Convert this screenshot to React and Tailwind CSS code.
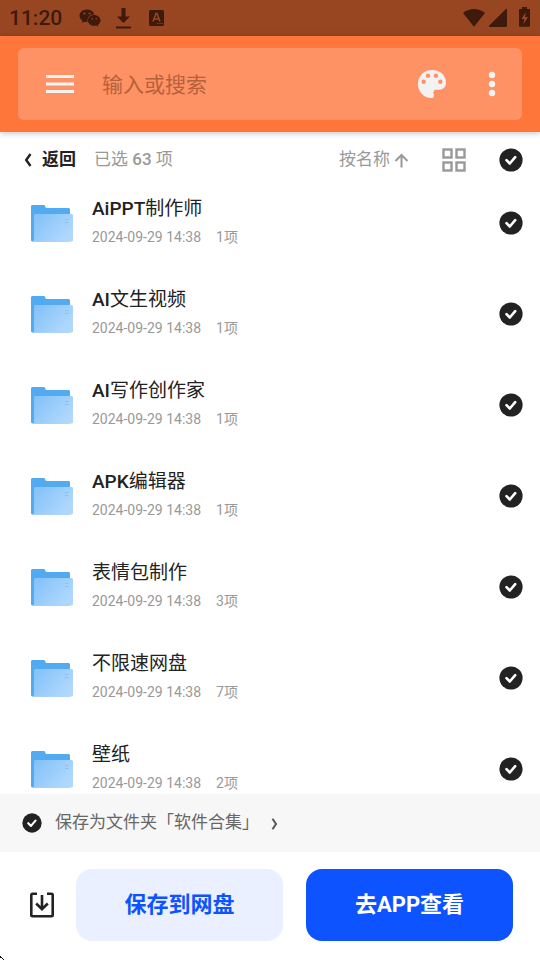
import { FaWeixin } from "react-icons/fa";

const FOLDERS = [
  { latin: "AiPPT", name: "制作师", date: "2024-09-29 14:38", count: 1 },
  { latin: "AI", name: "文生视频", date: "2024-09-29 14:38", count: 1 },
  { latin: "AI", name: "写作创作家", date: "2024-09-29 14:38", count: 1 },
  { latin: "APK", name: "编辑器", date: "2024-09-29 14:38", count: 1 },
  { latin: "", name: "表情包制作", date: "2024-09-29 14:38", count: 3 },
  { latin: "", name: "不限速网盘", date: "2024-09-29 14:38", count: 7 },
  { latin: "", name: "壁纸", date: "2024-09-29 14:38", count: 2 },
];

export default function App() {
  return (
    <div className="relative flex h-screen flex-col overflow-hidden bg-white font-['Roboto','Noto_Sans_CJK_SC',sans-serif] text-[#222222]">
      <StatusBar />
      <SearchHeader />
      <main className="flex min-h-0 flex-1 flex-col">
        <Toolbar />
        <ul className="min-h-0 flex-1 overflow-hidden">
          {FOLDERS.map((f) => <FolderRow key={f.latin + f.name} folder={f} />)}
        </ul>
      </main>
      <SaveTarget />
      <Actions />
      {/* Pointer tip in the corner */}
      <svg className="absolute bottom-0 left-0" width="5" height="5" viewBox="0 0 5 5" fill="#111111" shapeRendering="crispEdges" aria-hidden="true">
        <path d="M0 1h1v1h1v1H0zM2 3h1v1H2zM3 4h1v1H3z" />
      </svg>
    </div>
  );
}

const StatusBar = () => (
  <div className="flex h-9 shrink-0 items-center justify-between bg-[#984622] pl-[9px] pr-[9px] text-[#3d1a0c]">
    <div className="flex items-center">
      <span className="w-[70px] text-[21px] font-medium leading-9">11:20</span>
      <FaWeixin size={22} />
      <svg className="ml-[14px]" width="17" height="22" viewBox="0 0 17 22" fill="currentColor" aria-hidden="true">
        <path d="M6.500 1h4v8.500h4.500L8.500 16 2 9.500h4.500zM1 19.500h15v2H1z" />
      </svg>
      <svg className="ml-4" width="16" height="18" viewBox="0 0 16 18" aria-hidden="true">
        <rect x="1" y="1" width="15" height="16" rx="1.500" fill="currentColor" />
        <path d="M5 12.500 8 4.500h1l3 8M6.200 10h4.600" fill="none" stroke="#984622" strokeWidth="1.600" />
        <path d="M9 14.500h1.200M11.400 14.500h1.200M13.600 14.500h1.200" stroke="#984622" strokeWidth="1.200" />
      </svg>
    </div>
    <div className="flex items-center">
      <svg width="24" height="20" viewBox="0 0 24 20" fill="currentColor" aria-hidden="true">
        <path d="M1 5C7.500-.3 16.500-.3 23 5L12 18.800z" />
      </svg>
      <svg className="ml-0.5" width="20" height="20" viewBox="0 0 20 20" fill="currentColor" aria-hidden="true">
        <path d="M19 1.500V18a1 1 0 0 1-1 1H1.500c-.6 0-.9-.8-.4-1.200L18 1c.4-.4 1-.1 1 .5z" />
      </svg>
      <svg className="ml-2.5" width="13" height="22" viewBox="0 0 13 22" aria-hidden="true">
        <path d="M4 0h5v2h2.500l.5.500V19l-.8.800H1.800L1 19V2.500L1.500 2H4z" fill="currentColor" />
        <path d="M7.800 5 3.500 12h2.800l-1 5.500L10 10H7z" fill="#984622" />
      </svg>
    </div>
  </div>
);

const SearchHeader = () => (
  <header className="z-10 shrink-0 bg-[#ff763a] px-[18px] py-3 shadow-[0_1px_6px_rgba(0,0,0,0.25)]">
    <div className="flex h-[72px] items-center rounded-md bg-[#ff9264] pl-7 pr-6">
      <button type="button" aria-label="菜单">
        <svg width="28" height="28" viewBox="0 0 28 28" fill="#f3f3f3" aria-hidden="true">
          <path d="M0 5h28v3H0zM0 12.500h28v3H0zM0 20h28v3H0z" />
        </svg>
      </button>
      <input
        type="text"
        aria-label="输入或搜索"
        placeholder="输入或搜索"
        className="ml-7 min-w-0 flex-1 bg-transparent pt-1 text-[21px] text-[#5a2a14] outline-none placeholder:text-[#b5613c]"
      />
      <button type="button" aria-label="主题">
        <svg width="28" height="28" viewBox="0 0 28 28" aria-hidden="true">
          <path
            fill="#f2f2f2"
            fillRule="evenodd"
            d="M14 0C6 0 0 6 0 14s6 14 13.500 14c1.300 0 2.300-.3 2.300-.8v-3.400c-.9-.6-.9-1.400-.1-2 .2-1.400 1-2 2.300-2h3.500c3.700 0 6.500-3 6.500-7C28 5.300 22 0 14 0zM5.700 9.600a2.250 2.250 0 1 1 0 4.500 2.250 2.250 0 0 1 0-4.500zM10 3.500A2.250 2.250 0 1 1 10 8a2.250 2.250 0 0 1 0-4.500zM17.900 3.500a2.250 2.250 0 1 1 0 4.500 2.250 2.250 0 0 1 0-4.500zM22.300 9.600a2.250 2.250 0 1 1 0 4.500 2.250 2.250 0 0 1 0-4.500z"
          />
        </svg>
      </button>
      <button type="button" aria-label="更多" className="ml-10">
        <svg width="12" height="28" viewBox="0 0 12 28" fill="#f3f3f3" aria-hidden="true">
          <circle cx="6" cy="5" r="3.200" />
          <circle cx="6" cy="14" r="3.200" />
          <circle cx="6" cy="23" r="3.200" />
        </svg>
      </button>
    </div>
  </header>
);

const Toolbar = () => (
  <div className="flex shrink-0 items-center pb-1 pl-6 pr-[17px] pt-[13px] text-[17px] leading-7">
    <button type="button" className="flex items-center font-bold">
      <svg className="mr-2.5 mt-0.5" width="8" height="14" viewBox="0 0 8 14" fill="none" stroke="#222222" strokeWidth="2.400" aria-hidden="true">
        <path d="M6.500 1 2.200 7l4.300 6" />
      </svg>
      返回
    </button>
    <span className="ml-[18px] text-[#999999]">
      已选 <span className="font-medium">63</span> 项
    </span>
    <button type="button" className="ml-auto flex items-center text-[#999999]">
      按名称
      <svg className="ml-1 mt-0.5" width="15" height="15" viewBox="0 0 15 15" fill="none" stroke="currentColor" strokeWidth="2" aria-hidden="true">
        <path d="M7.500 14.500V2M1.500 8l6-6 6 6" />
      </svg>
    </button>
    <button type="button" aria-label="网格视图" className="ml-8 pt-0.5">
      <svg width="26" height="26" viewBox="0 0 26 26" fill="none" stroke="#999999" strokeWidth="2.400" aria-hidden="true">
        <rect x="2.500" y="2.500" width="8" height="8" />
        <rect x="15.500" y="2.500" width="8" height="8" />
        <rect x="2.500" y="15.500" width="8" height="8" />
        <rect x="15.500" y="15.500" width="8" height="8" />
      </svg>
    </button>
    <span className="ml-8 pt-0.5">
      <Check label="全选" />
    </span>
  </div>
);

const FolderRow = ({ folder }) => (
  <li className="flex h-[91px] items-center pl-[30px] pr-[17px]">
    <FolderIcon />
    <div className="ml-[18px] min-w-0 flex-1">
      <div className="truncate text-[19px] leading-7">
        {folder.latin && <span className="font-medium">{folder.latin}</span>}
        {folder.name}
      </div>
      <div className="flex gap-[15px] text-sm leading-7 text-[#999999]">
        <span>{folder.date}</span>
        <span>{folder.count}项</span>
      </div>
    </div>
    <Check label={folder.latin + folder.name} />
  </li>
);

const FolderIcon = () => (
  <svg className="shrink-0" width="44" height="38" viewBox="0 0 44 38" aria-hidden="true">
    <defs>
      <linearGradient id="folder-front" x1="0" y1="0" x2="1" y2="0.6">
        <stop offset="0" stopColor="#80c0f8" />
        <stop offset="1" stopColor="#b0d8fd" />
      </linearGradient>
    </defs>
    <path d="M1 2 2 1h12.500L16 4h23l1 1v32.500H2l-1-1z" fill="#52abf1" />
    <path d="M4 11 5 10h37l1 1v25.500l-1 1H3c.7-.5 1-1 1-2z" fill="url(#folder-front)" />
    <path d="M35 15.500h3.500M35 18.500h3.500" stroke="#85c2f8" strokeWidth="1" />
  </svg>
);

const Check = ({ label, small }) => (
  <label className={small ? "grid size-5 place-items-center" : "grid size-6 place-items-center"}>
    <input type="checkbox" defaultChecked aria-label={label} className="peer col-start-1 row-start-1 size-full appearance-none rounded-full border border-[#cccccc] checked:border-0" />
    <svg className="pointer-events-none invisible col-start-1 row-start-1 size-full peer-checked:visible" viewBox="0 0 24 24" fill="none" aria-hidden="true">
      <circle cx="12" cy="12" r="11.600" fill="#222222" />
      <path d="m7.500 12.200 3.300 3.300 5.400-6.300" stroke="#ffffff" strokeWidth="2.600" strokeLinecap="round" strokeLinejoin="round" />
    </svg>
  </label>
);

const SaveTarget = () => (
  <div className="flex h-[58px] shrink-0 items-center bg-[#f7f7f7] pl-[22px]">
    <Check label="保存为文件夹" small />
    <button type="button" className="ml-[13px] flex items-center pb-0.5 text-[17px] leading-7 text-[#666666]">
      保存为文件夹「软件合集」
      <svg className="ml-3 mt-1" width="7" height="12" viewBox="0 0 7 12" fill="none" stroke="#555555" strokeWidth="2" aria-hidden="true">
        <path d="M1.500 .800 5 6l-3.500 5.200" />
      </svg>
    </button>
  </div>
);

const Actions = () => (
  <div className="flex shrink-0 items-center pb-[19px] pl-[29px] pr-[27px] pt-[17px] text-[22px] font-bold">
    <button type="button" aria-label="下载">
      <svg width="26" height="26" viewBox="0 0 26 26" fill="none" stroke="#222222" strokeWidth="2.600" aria-hidden="true">
        <path d="M8 1.800H3.500a1.200 1.200 0 0 0-1.200 1.200v20a1.200 1.200 0 0 0 1.200 1.200h19a1.200 1.200 0 0 0 1.200-1.200V3a1.200 1.200 0 0 0-1.200-1.200H18" />
        <path d="M13 3v13.500M7.200 11.500l5.800 5.700 5.800-5.700" />
      </svg>
    </button>
    <button type="button" className="ml-[21px] h-[72px] flex-1 rounded-2xl bg-[#eaf0ff] pb-0.5 text-[#0d53ff]">保存到网盘</button>
    <button type="button" className="ml-[23px] h-[72px] flex-1 rounded-2xl bg-[#0d53ff] pb-0.5 text-white">去APP查看</button>
  </div>
);
